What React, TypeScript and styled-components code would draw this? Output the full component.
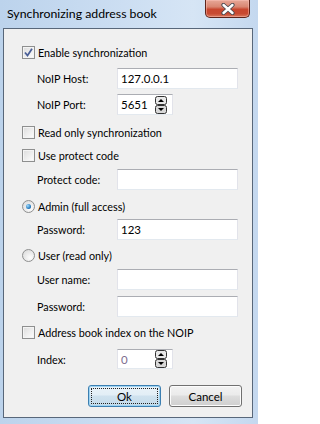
import React from "react";
import styled, { createGlobalStyle } from "styled-components";

const GlobalStyle = createGlobalStyle`
  html, body {
    margin: 0;
    padding: 0;
    background: #fff;
  }
  body {
    font-family: Lato, "Open Sans", "Liberation Sans", sans-serif;
  }
`;

const Window = styled.div`
  width: 258px;
  height: 424px;
  display: flex;
  flex-direction: column;
  box-sizing: border-box;
  background: linear-gradient(90deg, #bcd3ec 0%, #c9dcf1 40%, #d6e5f5 75%, #c4d8ef 100%);
`;

const TitleBar = styled.div`
  height: 28px;
  display: flex;
  align-items: flex-start;
  justify-content: space-between;
  flex-shrink: 0;
`;

const Title = styled.div`
  padding: 6px 0 0 7px;
  font-size: 12.3px;
  line-height: 16px;
  color: #000;
`;

const CloseButton = styled.div`
  width: 45px;
  height: 18px;
  margin-right: 8px;
  box-sizing: border-box;
  border: 1px solid #5e241b;
  border-top: none;
  border-radius: 0 0 5px 5px;
  background: linear-gradient(#e7a898 0%, #d98672 40%, #c8472f 55%, #c84a32 80%, #d9785d 100%);
  box-shadow: inset 0 0 0 1px rgba(255, 200, 190, 0.45);
  display: flex;
  align-items: center;
  justify-content: center;
`;

const Client = styled.div`
  flex: 1;
  margin: 0 5px 6px 3px;
  border: 1px solid #58677a;
  background: #f0f0f0;
  display: flex;
  flex-direction: column;
  padding-left: 18px;
  font-size: 10.8px;
  color: #000;
`;

const Row = styled.div<{ $mt: number; $h?: number; $indent?: boolean }>`
  display: flex;
  align-items: center;
  margin-top: ${({ $mt }) => $mt}px;
  height: ${({ $h }) => $h ?? 14}px;
  padding-left: ${({ $indent }) => ($indent ? 15 : 0)}px;
  flex-shrink: 0;
`;

const Label = styled.span`
  width: 80px;
  white-space: nowrap;
`;

const OptionText = styled.span`
  margin-left: 3px;
  white-space: nowrap;
`;

const Box = styled.span`
  width: 13px;
  height: 13px;
  box-sizing: border-box;
  border: 1px solid #8e8f8f;
  background: linear-gradient(135deg, #dcdcdc, #fefefe);
  box-shadow: inset 0 0 0 1px #f4f4f4;
  display: flex;
  align-items: center;
  justify-content: center;
  flex-shrink: 0;
`;

const Radio = styled.span<{ $on?: boolean }>`
  width: 13px;
  height: 13px;
  box-sizing: border-box;
  border-radius: 50%;
  border: 1px solid #8e8f8f;
  background: radial-gradient(circle at 65% 70%, #fdfdfd, #d6d6d6);
  display: flex;
  align-items: center;
  justify-content: center;
  flex-shrink: 0;
  &::after {
    content: "";
    display: ${({ $on }) => ($on ? "block" : "none")};
    width: 5px;
    height: 5px;
    border-radius: 50%;
    background: radial-gradient(circle at 35% 35%, #9fdcff, #1b6fb5 70%, #0d4a86);
  }
`;

const TextBox = styled.div<{ $w: number; $h?: number; $dim?: boolean }>`
  width: ${({ $w }) => $w}px;
  height: ${({ $h }) => $h ?? 21}px;
  box-sizing: border-box;
  background: #fff;
  border: 1px solid #e2e3ea;
  border-top-color: #abadb3;
  border-bottom-color: #e3e9ef;
  display: flex;
  align-items: center;
  justify-content: space-between;
  padding: 0 5px 0 3px;
  font-size: 11.5px;
  color: ${({ $dim }) => ($dim ? "#7d6d90" : "#000")};
`;

const ButtonRow = styled.div`
  display: flex;
  justify-content: flex-end;
  gap: 8px;
  margin-top: 16px;
  padding-right: 10px;
`;

const Button = styled.div<{ $default?: boolean }>`
  width: 73px;
  height: 22px;
  box-sizing: border-box;
  border-radius: 3px;
  border: 1px solid ${({ $default }) => ($default ? "#3c7fb1" : "#707070")};
  background: ${({ $default }) =>
    $default
      ? "linear-gradient(#eaf3f9 0%, #e2eef6 45%, #cfe2ef 50%, #c4dbea 100%)"
      : "linear-gradient(#f2f2f2 0%, #ebebeb 45%, #dddddd 50%, #cfcfcf 100%)"};
  box-shadow: inset 0 0 0 1px ${({ $default }) => ($default ? "#9ed3f2" : "#fcfcfc")};
  display: flex;
  align-items: center;
  justify-content: center;
  padding: 2px;
  font-size: 11.5px;
`;

const FocusRing = styled.span`
  flex: 1;
  align-self: stretch;
  border: 1px dotted #222;
  display: flex;
  align-items: center;
  justify-content: center;
`;

const Check = () => (
  <svg width="9" height="9" viewBox="0 0 9 9">
    <path d="M1 4.5 L3.5 7.5 L8 0.8" fill="none" stroke="#4a5f97" strokeWidth="1.8" />
  </svg>
);

const CloseX = () => (
  <svg width="14" height="12" viewBox="0 0 14 12">
    <path d="M2.5 2 L11.5 10 M11.5 2 L2.5 10" stroke="#4a4a52" strokeWidth="4.2" strokeLinecap="round" />
    <path d="M2.5 2 L11.5 10 M11.5 2 L2.5 10" stroke="#fff" strokeWidth="2.4" strokeLinecap="round" />
  </svg>
);

const Spin = () => (
  <svg width="12" height="18" viewBox="0 0 12 18">
    <rect x="0.5" y="0.5" width="11" height="8" rx="2" fill="#e8e8e8" stroke="#333" />
    <rect x="0.5" y="9.5" width="11" height="8" rx="2" fill="#d8d8d8" stroke="#333" />
    <path d="M3 6 L6 3 L9 6 Z" fill="#000" />
    <path d="M3 12 L6 15 L9 12 Z" fill="#000" />
  </svg>
);

const CheckOption = ({ mt, checked, children }: { mt: number; checked?: boolean; children: React.ReactNode }) => (
  <Row $mt={mt}>
    <Box>{checked && <Check />}</Box>
    <OptionText>{children}</OptionText>
  </Row>
);

const RadioOption = ({ mt, on, children }: { mt: number; on?: boolean; children: React.ReactNode }) => (
  <Row $mt={mt}>
    <Radio $on={on} />
    <OptionText>{children}</OptionText>
  </Row>
);

const Field = ({
  mt,
  label,
  value,
  width = 121,
  h,
  spin,
  dim,
}: {
  mt: number;
  label: string;
  value?: string;
  width?: number;
  h?: number;
  spin?: boolean;
  dim?: boolean;
}) => (
  <Row $mt={mt} $h={h ?? 21} $indent>
    <Label>{label}</Label>
    <TextBox $w={width} $h={h} $dim={dim}>
      <span>{value}</span>
      {spin && <Spin />}
    </TextBox>
  </Row>
);

export default function App() {
  return (
    <>
      <GlobalStyle />
      <Window>
        <TitleBar>
          <Title>Synchronizing address book</Title>
          <CloseButton>
            <CloseX />
          </CloseButton>
        </TitleBar>
        <Client>
          <CheckOption mt={16} checked>
            Enable synchronization
          </CheckOption>
          <Field mt={9} label="NoIP Host:" value="127.0.0.1" />
          <Field mt={5} label="NoIP Port:" value="5651" width={56} spin />
          <CheckOption mt={10}>Read only synchronization</CheckOption>
          <CheckOption mt={9}>Use protect code</CheckOption>
          <Field mt={7} label="Protect code:" />
          <RadioOption mt={9} on>
            Admin (full access)
          </RadioOption>
          <Field mt={6} label="Password:" value="123" />
          <RadioOption mt={8}>User (read only)</RadioOption>
          <Field mt={7} label="User name:" />
          <Field mt={6} label="Password:" />
          <CheckOption mt={8}>Address book index on the NOIP</CheckOption>
          <Field mt={10} label="Index:" value="0" width={56} h={20} spin dim />
          <ButtonRow>
            <Button $default>
              <FocusRing>Ok</FocusRing>
            </Button>
            <Button>Cancel</Button>
          </ButtonRow>
        </Client>
      </Window>
    </>
  );
}
